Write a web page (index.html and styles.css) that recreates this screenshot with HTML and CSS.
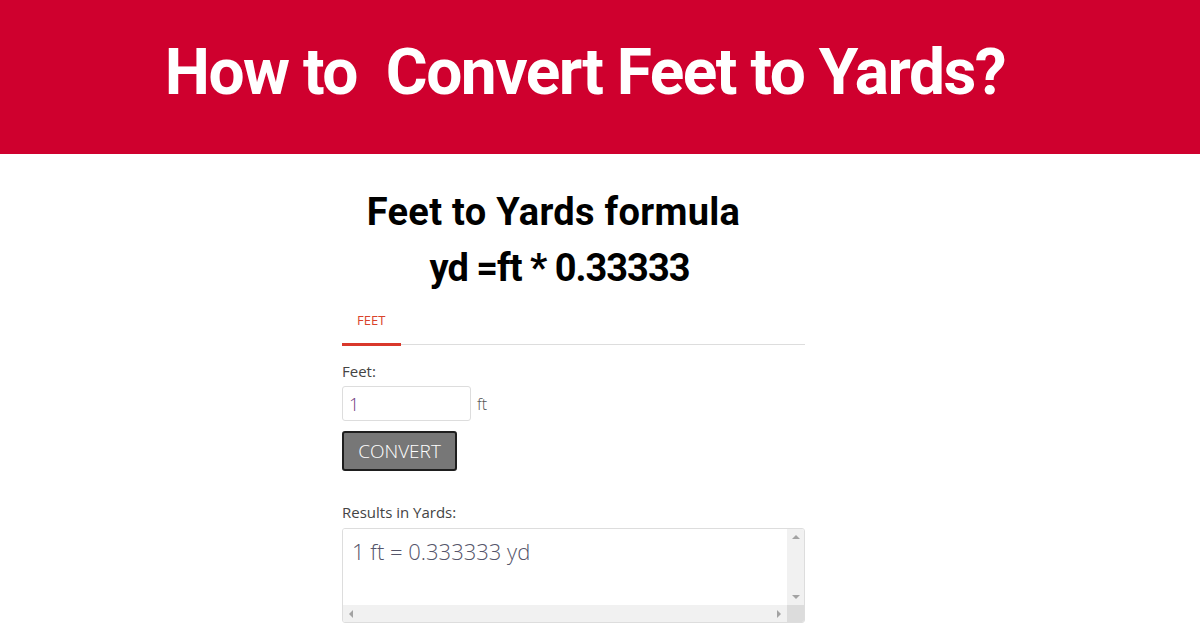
FILE: index.html
```html
<!DOCTYPE html>
<html lang="en">
<head>
    <meta charset="UTF-8">
    <meta name="viewport" content="width=device-width, initial-scale=1.0">
    <title>Feet to Yards</title>
    <link rel="stylesheet" href="styles.css">
</head>
<body>
    <!-- Red banner -->
    <div class="banner">
        <h1>How to &nbsp;Convert Feet to Yards?</h1>
    </div>

    <div class="converter">
        <h2 class="formula">Feet to Yards formula</h2>
        <h2 class="formula formula-eq">yd =ft * 0.33333</h2>

        <!-- Tabs -->
        <div class="tabs">
            <span class="tab active">FEET</span>
        </div>

        <label class="field-label" for="feet">Feet:</label>
        <div class="input-row">
            <input id="feet" class="feet-input" type="text" value="1">
            <span class="unit">ft</span>
        </div>
        <button class="convert-btn">CONVERT</button>

        <label class="field-label results-label" for="results">Results in Yards:</label>
        <!-- Results box with classic scrollbars -->
        <div class="results">
            <textarea id="results" class="results-text" wrap="off">1 ft = 0.333333 yd</textarea>
            <div class="vbar">
                <span class="arrow arrow-up"></span>
                <span class="arrow arrow-down"></span>
            </div>
            <div class="hbar">
                <span class="arrow arrow-left"></span>
                <span class="arrow arrow-right"></span>
            </div>
            <div class="corner"></div>
        </div>
    </div>
</body>
</html>
```

FILE: styles.css
```css
body {
    margin: 0;
    font-family: "Open Sans", Arial, sans-serif;
    background: #ffffff;
    color: #333333;
}

/* Banner */
.banner {
    background: #cf002e;
    height: 154px;
    display: flex;
    align-items: center;
    justify-content: center;
    padding-right: 30px;
    padding-bottom: 10px;
    box-sizing: border-box;
}

.banner h1 {
    margin: 0;
    color: #ffffff;
    font-family: Roboto, Arial, sans-serif;
    font-weight: 700;
    font-size: 64px;
    letter-spacing: -1.5px;
    white-space: nowrap;
}

/* Converter box */
.converter {
    width: 463px;
    margin-left: 342px;
    padding-top: 30px;
}

.formula {
    margin: 0;
    padding-right: 40px;
    text-align: center;
    font-family: Roboto, Arial, sans-serif;
    font-weight: 700;
    font-size: 38px;
    line-height: 56px;
    color: #000000;
    letter-spacing: 0.3px;
}

.formula-eq {
    padding-right: 28px;
    letter-spacing: -1px;
}

.tabs {
    margin-top: 10px;
    border-bottom: 1px solid #dddddd;
    display: flex;
}

.tab {
    font-size: 13px;
    padding: 5px 16px 14px 15px;
    color: #d9432b;
}

.tab.active {
    border-bottom: 3px solid #d9382b;
    margin-bottom: -2px;
}

.field-label {
    display: block;
    font-size: 15px;
    margin-top: 16px;
    color: #444444;
}

.input-row {
    display: flex;
    align-items: center;
    margin-top: 5px;
}

.feet-input {
    width: 129px;
    height: 35px;
    box-sizing: border-box;
    border: 1px solid #dddddd;
    border-radius: 3px;
    padding: 4px 6px;
    font-family: inherit;
    font-weight: 300;
    font-size: 18px;
    color: #6e3a80;
}

.unit {
    margin-left: 6px;
    font-size: 16px;
    font-weight: 300;
    color: #555555;
}

.convert-btn {
    display: block;
    margin-top: 10px;
    width: 115px;
    height: 40px;
    background: #777777;
    border: 2px solid #1e1e1e;
    border-radius: 3px;
    color: #ffffff;
    font-family: inherit;
    font-size: 19px;
    font-weight: 300;
    padding: 0;
}

.results-label {
    margin-top: 31px;
}

/* Results box: text area plus drawn scrollbars */
.results {
    margin-top: 6px;
    width: 463px;
    height: 95px;
    box-sizing: border-box;
    border: 1px solid #dddddd;
    border-radius: 3px;
    display: grid;
    grid-template-columns: 1fr 17px;
    grid-template-rows: 1fr 17px;
    overflow: hidden;
}

.results-text {
    border: none;
    outline: none;
    resize: none;
    overflow: hidden;
    padding: 7px 9px;
    font-family: inherit;
    font-size: 22px;
    font-weight: 300;
    color: #55556a;
}

.vbar,
.hbar {
    background: #f1f1f1;
    display: flex;
    justify-content: space-between;
    align-items: center;
}

.vbar {
    flex-direction: column;
    padding: 6px 0;
}

.hbar {
    padding: 0 6px;
}

.corner {
    background: #dcdcdc;
}

.arrow {
    width: 0;
    height: 0;
}

.arrow-up {
    border-left: 4px solid transparent;
    border-right: 4px solid transparent;
    border-bottom: 4px solid #a3a3a3;
}

.arrow-down {
    border-left: 4px solid transparent;
    border-right: 4px solid transparent;
    border-top: 4px solid #a3a3a3;
}

.arrow-left {
    border-top: 4px solid transparent;
    border-bottom: 4px solid transparent;
    border-right: 4px solid #a3a3a3;
}

.arrow-right {
    border-top: 4px solid transparent;
    border-bottom: 4px solid transparent;
    border-left: 4px solid #a3a3a3;
}
```
